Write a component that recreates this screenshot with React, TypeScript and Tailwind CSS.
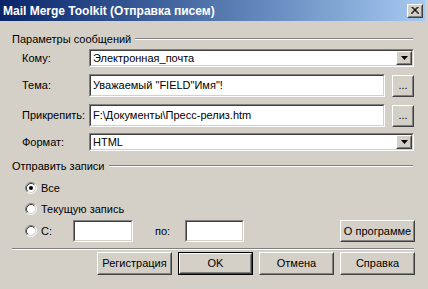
import React from 'react';

const FONT = { fontFamily: '"Liberation Sans", Arial, sans-serif' };

const Sunken: React.FC<{ className?: string; children?: React.ReactNode }> = ({ className = '', children }) => (
    <div className={`border border-t-[#808080] border-l-[#808080] border-b-white border-r-white ${className}`}>
        <div className="h-full w-full border border-t-[#404040] border-l-[#404040] border-b-[#d4d0c8] border-r-[#d4d0c8] bg-white flex items-center">
            {children}
        </div>
    </div>
);

const Raised: React.FC<{ className?: string; children?: React.ReactNode }> = ({ className = '', children }) => (
    <div className={`border border-t-white border-l-white border-b-[#404040] border-r-[#404040] bg-[#d4d0c8] ${className}`}>
        <div className="h-full w-full border border-t-[#d4d0c8] border-l-[#d4d0c8] border-b-[#808080] border-r-[#808080] flex items-center justify-center">
            {children}
        </div>
    </div>
);

const Combo: React.FC<{ value: string }> = ({ value }) => (
    <Sunken className="flex-1 h-[18px]">
        <span className="flex-1 pl-[2px] leading-none">{value}</span>
        <Raised className="w-[16px] h-full">
            <svg width="7" height="4" viewBox="0 0 7 4">
                <path d="M0 0 H7 L3.5 4 Z" fill="#000" />
            </svg>
        </Raised>
    </Sunken>
);

const Radio: React.FC<{ checked?: boolean }> = ({ checked }) => (
    <svg width="12" height="12" viewBox="0 0 12 12" className="shrink-0">
        <circle cx="6" cy="6" r="4.5" fill="#fff" />
        <path d="M2.11 9.89 A5.5 5.5 0 0 1 9.89 2.11" stroke="#808080" fill="none" />
        <path d="M9.89 2.11 A5.5 5.5 0 0 1 2.11 9.89" stroke="#fff" fill="none" />
        <path d="M2.82 9.18 A4.5 4.5 0 0 1 9.18 2.82" stroke="#404040" fill="none" />
        <path d="M9.18 2.82 A4.5 4.5 0 0 1 2.82 9.18" stroke="#d4d0c8" fill="none" />
        {checked && <circle cx="6" cy="6" r="2" fill="#000" />}
    </svg>
);

const GroupTitle: React.FC<{ text: string; className?: string }> = ({ text, className = '' }) => (
    <div className={`flex items-center h-[14px] ${className}`}>
        <span className="leading-none">{text}</span>
        <div className="flex-1 ml-[4px] mr-[1px] flex flex-col">
            <div className="h-px bg-[#808080]" />
            <div className="h-px bg-white" />
        </div>
    </div>
);

const Label: React.FC<{ text: string }> = ({ text }) => (
    <span className="w-[67px] shrink-0 leading-none">{text}</span>
);

export default function App() {
    return (
        <div className="w-[428px] h-[289px] bg-[#d4d0c8] text-[11px] text-black overflow-hidden" style={FONT}>
            <div className="h-[21px] w-[425px] bg-gradient-to-r from-[#0a246a] to-[#a6caf0] flex items-center justify-between pl-[3px] pr-[2px]">
                <span className="text-white font-bold text-[12px] leading-none">Mail Merge Toolkit (Отправка писем)</span>
                <Raised className="w-[16px] h-[14px]">
                    <svg width="8" height="7" viewBox="0 0 8 7">
                        <path d="M0.5 0 L7.5 7 M1.5 0 L8.5 7 M7.5 0 L0.5 7 M6.5 0 L-0.5 7" stroke="#000" strokeWidth="1" fill="none" />
                    </svg>
                </Raised>
            </div>

            <div className="pl-[12px] pr-[14px]">
                <GroupTitle text="Параметры сообщений" className="mt-[11px]" />

                <div className="pl-[10px]">
                    <div className="flex items-center mt-[3px]">
                        <Label text="Кому:" />
                        <Combo value="Электронная_почта" />
                    </div>
                    <div className="flex items-center mt-[7px]">
                        <Label text="Тема:" />
                        <Sunken className="flex-1 h-[23px]">
                            <span className="pl-[2px] leading-none">Уважаемый "FIELD"Имя"!</span>
                        </Sunken>
                        <Raised className="w-[22px] h-[22px] ml-[7px]">
                            <span className="leading-none">...</span>
                        </Raised>
                    </div>
                    <div className="flex items-center mt-[7px]">
                        <Label text="Прикрепить:" />
                        <Sunken className="flex-1 h-[23px]">
                            <span className="pl-[2px] leading-none">F:\Документы\Пресс-релиз.htm</span>
                        </Sunken>
                        <Raised className="w-[22px] h-[22px] ml-[7px]">
                            <span className="leading-none">...</span>
                        </Raised>
                    </div>
                    <div className="flex items-center mt-[6px]">
                        <Label text="Формат:" />
                        <Combo value="HTML" />
                    </div>
                </div>

                <GroupTitle text="Отправить записи" className="mt-[8px]" />

                <div className="pl-[13px]">
                    <div className="flex items-center gap-[4px] h-[14px] mt-[8px]">
                        <Radio checked />
                        <span className="leading-none">Все</span>
                    </div>
                    <div className="flex items-center gap-[4px] h-[14px] mt-[7px]">
                        <Radio />
                        <span className="leading-none">Текущую запись</span>
                    </div>
                    <div className="flex items-center h-[22px] mt-[4px]">
                        <Radio />
                        <span className="leading-none ml-[4px] w-[32px]">С:</span>
                        <Sunken className="w-[60px] h-[22px]" />
                        <span className="leading-none ml-[22px] w-[30px]">по:</span>
                        <Sunken className="w-[59px] h-[22px]" />
                        <div className="flex-1" />
                        <Raised className="w-[75px] h-[22px] mr-[-1px]">
                            <span className="leading-none">О программе</span>
                        </Raised>
                    </div>
                </div>

                <div className="mt-[6px] flex flex-col">
                    <div className="h-px bg-[#808080]" />
                    <div className="h-px bg-white" />
                </div>

                <div className="flex justify-end gap-[6px] mt-[2px] mr-[-1px]">
                    <Raised className="w-[75px] h-[23px]">
                        <span className="leading-none">Регистрация</span>
                    </Raised>
                    <div className="border border-black">
                        <Raised className="w-[73px] h-[21px]">
                            <span className="leading-none">OK</span>
                        </Raised>
                    </div>
                    <Raised className="w-[75px] h-[23px]">
                        <span className="leading-none">Отмена</span>
                    </Raised>
                    <Raised className="w-[75px] h-[23px]">
                        <span className="leading-none">Справка</span>
                    </Raised>
                </div>
            </div>
        </div>
    );
}
